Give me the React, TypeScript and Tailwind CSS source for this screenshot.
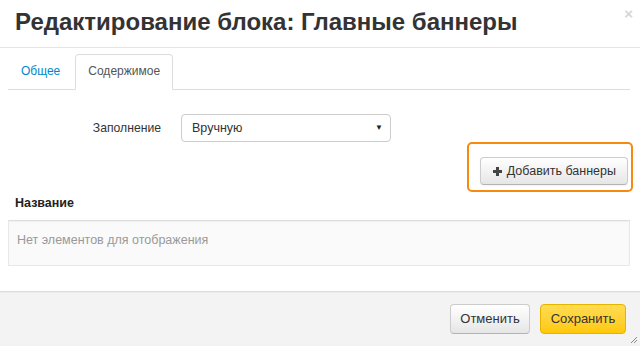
import React from 'react';

const PlusIcon: React.FC = () => (
    <svg width="9" height="9" viewBox="0 0 10 10" className="mr-[5px]">
        <path d="M3.3 0h3.4v3.3H10v3.4H6.7V10H3.3V6.7H0V3.3h3.3z" fill="#444"/>
    </svg>
);

const App: React.FC = () => {
    return (
        <div className="relative w-[640px] h-[346px] bg-white overflow-hidden text-[12.5px] text-[#333] font-['Liberation_Sans',Arial,sans-serif] flex flex-col">
            {/* Header */}
            <div className="h-[48px] border-b border-[#e5e5e5] px-[15px] flex items-center shrink-0">
                <h3 className="text-[24px] font-bold leading-none text-[#333] pb-[3px]">Редактирование блока: Главные баннеры</h3>
            </div>
            <span className="absolute right-[7px] top-[6px] text-[15px] font-bold leading-none text-[#d6d6d6]">×</span>

            {/* Body */}
            <div className="flex-1 px-[8px] pt-[6px]">
                {/* Tabs */}
                <div className="flex border-b border-[#ddd] mr-[2px] text-[12px]">
                    <div className="px-[12px] py-[8px] leading-[17px] mr-[2px] text-[#0088cc] border border-transparent">Общее</div>
                    <div className="px-[12px] py-[8px] leading-[17px] -mb-px bg-white border border-[#ddd] border-b-white rounded-t-[4px] text-[#555]">Содержимое</div>
                </div>

                {/* Fill mode */}
                <div className="flex items-center mt-[24px]">
                    <label className="w-[153px] text-right text-[#333] text-[12.2px]">Заполнение</label>
                    <div className="ml-[20px] w-[210px] h-[28px] border border-[#ccc] rounded-[4px] flex items-center justify-between pl-[10px] pr-[7px] bg-white">
                        <span className="text-[#333]">Вручную</span>
                        <span className="text-[8px] text-[#222]">▼</span>
                    </div>
                </div>

                {/* Add banners */}
                <div className="flex justify-end mt-[15px] pr-[4px]">
                    <div className="relative">
                        <button className="h-[28px] pl-[12px] pr-[11px] flex items-center rounded-[4px] border border-[#ccc] border-b-[#b3b3b3] bg-gradient-to-b from-white to-[#e6e6e6] text-[#333] shadow-[inset_0_1px_0_rgba(255,255,255,0.2),0_1px_2px_rgba(0,0,0,0.05)]">
                            <PlusIcon/>
                            Добавить баннеры
                        </button>
                        <div className="absolute -left-[13px] -top-[15px] -right-[5px] -bottom-[7px] border-2 border-[#f7890f] rounded-[5px] pointer-events-none"/>
                    </div>
                </div>

                {/* Table */}
                <div className="mt-[8px] px-[7px] font-bold text-[#222] leading-[20px]">Название</div>
                <div className="mt-[7px] mr-[2px] h-[46px] border border-[#e8e8e8] border-t-[#dddddd] bg-[#fafafa] px-[8px] pt-[10px] text-[#999] shadow-[inset_0_1px_1px_rgba(0,0,0,0.04)]">
                    Нет элементов для отображения
                </div>
            </div>

            {/* Footer */}
            <div className="h-[55px] shrink-0 bg-[#f3f3f3] border-t border-[#dcdcdc] shadow-[inset_0_1px_0_#ececec] flex items-center justify-end gap-[10px] pr-[14px] relative">
                <button className="h-[30px] w-[80px] rounded-[4px] border border-[#ccc] border-b-[#b3b3b3] bg-gradient-to-b from-white to-[#e6e6e6] text-[13px] text-[#333]">Отменить</button>
                <button className="h-[30px] w-[86px] rounded-[4px] border border-[#e5b400] bg-gradient-to-b from-[#ffdc4f] to-[#ffc800] text-[13px] text-[#333]">Сохранить</button>
                <svg width="8" height="8" viewBox="0 0 8 8" className="absolute right-[2px] bottom-[2px]">
                    <path d="M7 1L1 7M7 4L4 7" stroke="#888" strokeWidth="1"/>
                </svg>
            </div>
        </div>
    );
};

export default App;
